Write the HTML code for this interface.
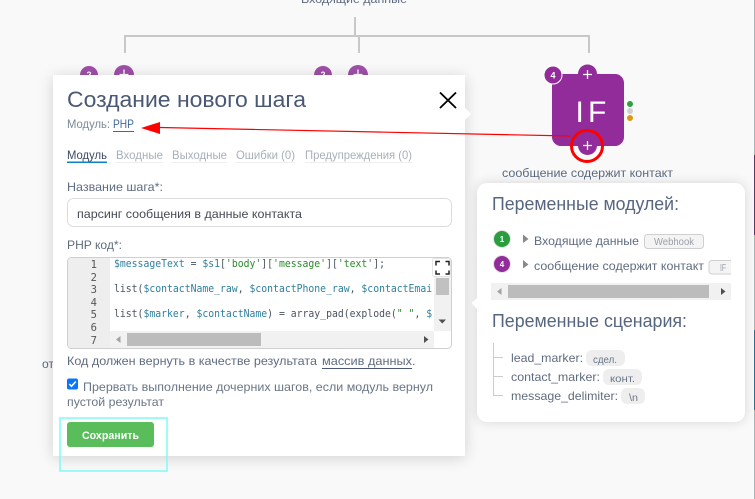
<!DOCTYPE html>
<html lang="ru"><head><meta charset="utf-8"><title>Создание нового шага</title>
<style>
html,body{margin:0;padding:0;width:755px;height:499px;overflow:hidden;background:#f9f9f9}
svg{position:absolute;left:0;top:0;filter:blur(.3px)}
.box{position:absolute;background:#fff}
text{font-family:"Liberation Sans",sans-serif;font-size:12px;fill:#5c6a80}
.m{font-family:"DejaVu Sans Mono",monospace;font-size:11px;fill:#4a5560}
.n{font-family:"DejaVu Sans Mono",monospace;font-size:10.500px;fill:#555;text-anchor:end}
.v{fill:#2f7f9f}.s{fill:#2c8a2c}
</style></head><body>
<svg width="755" height="499" viewBox="0 0 755 499">
<rect x="754" y="0" width="1" height="499" fill="#a9b3b3"/>
<rect x="754" y="155" width="1" height="80" fill="#5a3a6a"/>
<rect x="754" y="330" width="1" height="80" fill="#2f6f8f"/>
<g fill="none" stroke="#c8c8c8" stroke-width="2">
<path d="M125 53V36H589V53M355 17V36M359 36V53"/>
</g>
<text x="301" y="3" textLength="106" lengthAdjust="spacingAndGlyphs">Входящие данные</text>
<circle cx="89" cy="75" r="9" fill="#a04fa9"/><circle cx="124" cy="75" r="10" fill="#a04fa9"/>
<circle cx="323" cy="75" r="9" fill="#a04fa9"/><circle cx="358" cy="75" r="10" fill="#a04fa9"/>
<text x="89" y="78" text-anchor="middle" style="font-size:9px;font-weight:bold;fill:#fff">2</text>
<text x="323" y="78" text-anchor="middle" style="font-size:9px;font-weight:bold;fill:#fff">2</text>
<path d="M124 69.500V79M119.500 74.500H128.500M358 69.500V79M353.500 74.500H362.500" stroke="#fff" stroke-width="1.300"/>
<text x="42" y="368" textLength="12" lengthAdjust="spacingAndGlyphs">от</text>
<rect x="552" y="74" width="72" height="72" rx="9" fill="#922c9a"/>
<circle cx="587.500" cy="74" r="9.500" fill="#922c9a"/>
<circle cx="553" cy="75" r="9" fill="#922c9a" stroke="#fff" stroke-width="1"/>
<text x="553" y="78.500" text-anchor="middle" style="font-size:9px;font-weight:bold;fill:#fff">4</text>
<path d="M587.500 70V79M583 74.500H592" stroke="#fff" stroke-width="1.300"/>
<text y="122" style="font-size:30px;fill:#fff"><tspan x="575.500">I</tspan><tspan x="588">F</tspan></text>
<circle cx="630" cy="104" r="3" fill="#2ea043"/><circle cx="630" cy="111" r="3" fill="#cfcfcf"/><circle cx="630" cy="118" r="3" fill="#dc9a12"/>
<path d="M572 146A15.500 15.500 0 0 0 603 146Z" fill="#f9f9f9"/>
<circle cx="587.500" cy="145.500" r="9.500" fill="#922c9a"/>
<path d="M587.500 141V150M583 145.500H592" stroke="#fff" stroke-width="1.300"/>
<text x="502" y="177" textLength="171" lengthAdjust="spacingAndGlyphs">сообщение содержит контакт</text>
</svg>

<div class="box" style="left:53px;top:75px;width:412px;height:381px;box-shadow:0 2px 14px rgba(0,0,0,.16)"></div>
<div class="box" style="left:477px;top:183px;width:268px;height:239px;border-radius:10px;box-shadow:0 0 12px rgba(0,0,0,.14)"></div>

<svg width="755" height="499" viewBox="0 0 755 499">
<path d="M465 108L471 114L465 120Z" fill="#fff"/>
<path d="M477 298L471.500 303L477 309Z" fill="#fff"/>
<path d="M440 92.500L456 108M456 92.500L440 108" stroke="#000" stroke-width="1.800" fill="none"/>
<text x="67" y="107" textLength="239" lengthAdjust="spacingAndGlyphs" style="font-size:22px;fill:#4a5874">Создание нового шага</text>
<text x="67" y="128" textLength="43" lengthAdjust="spacingAndGlyphs" style="fill:#7b8a9a">Модуль:</text>
<text x="113" y="128" textLength="21" lengthAdjust="spacingAndGlyphs" style="fill:#3f6a9c">PHP</text>
<rect x="113" y="131" width="21" height="1" fill="#3f6a9c"/>

<text x="67" y="159" textLength="40" lengthAdjust="spacingAndGlyphs" style="fill:#3d4a66">Модуль</text>
<text x="116" y="159" textLength="47" lengthAdjust="spacingAndGlyphs" style="fill:#a7b0ba">Входные</text>
<text x="172" y="159" textLength="55" lengthAdjust="spacingAndGlyphs" style="fill:#a7b0ba">Выходные</text>
<text x="236" y="159" textLength="59" lengthAdjust="spacingAndGlyphs" style="fill:#a7b0ba">Ошибки (0)</text>
<text x="305" y="159" textLength="107" lengthAdjust="spacingAndGlyphs" style="fill:#a7b0ba">Предупреждения (0)</text>
<rect x="67" y="161.500" width="40" height="1.500" fill="#0a84c6"/>
<g fill="#eeeeee"><rect x="116" y="162" width="47" height="1"/><rect x="172" y="162" width="55" height="1"/><rect x="236" y="162" width="59" height="1"/><rect x="305" y="162" width="107" height="1"/></g>

<text x="67" y="191" textLength="96" lengthAdjust="spacingAndGlyphs" style="fill:#5f6c80">Название шага*:</text>
<rect x="67.500" y="198.500" width="384" height="28" rx="6" fill="#fff" stroke="#dcdcdc"/>
<text x="77" y="218" textLength="225" lengthAdjust="spacingAndGlyphs" style="fill:#454b55">парсинг сообщения в данные контакта</text>
<text x="67" y="249" textLength="55" lengthAdjust="spacingAndGlyphs" style="fill:#5f6c80">PHP код*:</text>

<rect x="67.500" y="257.500" width="384" height="91" rx="4" fill="#fff" stroke="#cfcfcf"/>
<path d="M68 262a4 4 0 0 1 4-4H110V348H72a4 4 0 0 1-4-4Z" fill="#eeeeee"/>
<g>
<text class="n" x="97" y="268">1</text><text class="n" x="97" y="281">2</text><text class="n" x="97" y="293">3</text><text class="n" x="97" y="306">4</text><text class="n" x="97" y="318">5</text><text class="n" x="97" y="331">6</text><text class="n" x="97" y="344">7</text>
</g>
<clipPath id="c"><rect x="110" y="258" width="322" height="73"/></clipPath>
<g clip-path="url(#c)">
<text class="m" transform="translate(114 267) scale(.89 1)"><tspan class="v">$messageText</tspan> = <tspan class="v">$s1</tspan>[<tspan class="s">'body'</tspan>][<tspan class="s">'message'</tspan>][<tspan class="s">'text'</tspan>];</text>
<text class="m" transform="translate(114 292) scale(.89 1)">list(<tspan class="v">$contactName_raw</tspan>, <tspan class="v">$contactPhone_raw</tspan>, <tspan class="v">$contactEmail_raw</tspan>)</text>
<text class="m" transform="translate(114 317) scale(.89 1)">list(<tspan class="v">$marker</tspan>, <tspan class="v">$contactName</tspan>) = array_pad(explode(<tspan class="s">" "</tspan>, <tspan class="v">$contactName_raw</tspan>)</text>
</g>
<rect x="434" y="276" width="17" height="55" fill="#f1f1f1"/>
<rect x="436" y="278" width="13" height="17" fill="#c1c1c1"/>
<path d="M438.500 319.500H446L442.300 323.500Z" fill="#505050"/>
<rect x="110" y="331" width="324" height="17" fill="#f1f1f1"/>
<rect x="127" y="333" width="134" height="13" fill="#bcbcbc"/>
<path d="M120.500 336V343L116 339.500Z" fill="#a3a3a3"/><path d="M424 336V343L428.500 339.500Z" fill="#505050"/>
<rect x="432.500" y="258.500" width="18" height="18" rx="2" fill="#fff" stroke="#e4e4e4"/>
<path d="M436 265.500V261.500H440M445.500 261.500H449V265.500M449 270.500V274H445.500M440 274H436V270.500" fill="none" stroke="#222" stroke-width="1.500"/>

<text x="67" y="365" textLength="250" lengthAdjust="spacingAndGlyphs" style="fill:#5f6c80">Код должен вернуть в качестве результата</text>
<text x="322" y="365" textLength="90" lengthAdjust="spacingAndGlyphs" style="fill:#5f6c80">массив данных</text>
<text x="412" y="365" style="fill:#5f6c80">.</text>
<rect x="322" y="368" width="90" height="1" fill="#4a5874"/>
<rect x="67" y="378.500" width="11" height="11" rx="2" fill="#0a75f5"/>
<path d="M69.300 384L71.500 386.300L75.800 381.500" fill="none" stroke="#fff" stroke-width="1.600"/>
<text x="83" y="391" textLength="350" lengthAdjust="spacingAndGlyphs" style="fill:#6a7686">Прервать выполнение дочерних шагов, если модуль вернул</text>
<text x="67" y="406" textLength="97" lengthAdjust="spacingAndGlyphs" style="fill:#6a7686">пустой результат</text>
<rect x="67" y="422" width="87" height="25" rx="3" fill="#58bd5a"/>
<text x="82" y="439" textLength="57" lengthAdjust="spacingAndGlyphs" style="fill:#fff;font-size:11px;font-weight:bold">Сохранить</text>
<rect x="60" y="418" width="107" height="53" fill="none" stroke="#7dfafa" stroke-width="1.500"/>

<text x="492" y="210" textLength="187" lengthAdjust="spacingAndGlyphs" style="font-size:18px;fill:#566580">Переменные модулей:</text>
<circle cx="502" cy="239" r="8.500" fill="#2a9d3f" stroke="#e4e4e4"/>
<text x="502" y="242" text-anchor="middle" style="font-size:8px;font-weight:bold;fill:#fff">1</text>
<circle cx="502" cy="264" r="8.500" fill="#922c9a" stroke="#e4e4e4"/>
<text x="502" y="267" text-anchor="middle" style="font-size:8px;font-weight:bold;fill:#fff">4</text>
<path d="M523 234.500V243L528.500 239Z M523 260V268.500L528.500 264.500Z" fill="#888"/>
<text x="534" y="245" textLength="105" lengthAdjust="spacingAndGlyphs" style="fill:#5f6c80">Входящие данные</text>
<rect x="644.500" y="234.500" width="59" height="14" rx="3" fill="#f4f4f4" stroke="#cfcfcf"/>
<text x="654" y="245" textLength="40" lengthAdjust="spacingAndGlyphs" style="font-size:10px;fill:#9aa0a8">Webhook</text>
<text x="534" y="270" textLength="170" lengthAdjust="spacingAndGlyphs" style="fill:#5f6c80">сообщение содержит контакт</text>
<path d="M731 260.500H712a3 3 0 0 0-3 3V271a3 3 0 0 0 3 3H731" fill="#f4f4f4" stroke="#cfcfcf"/>
<text x="720" y="271" textLength="6" lengthAdjust="spacingAndGlyphs" style="font-size:10px;fill:#9aa0a8">IF</text>
<rect x="491" y="283" width="240" height="17" fill="#f1f1f1"/>
<rect x="508" y="285" width="201" height="13" fill="#bcbcbc"/>
<path d="M501.500 288V295L497 291.500Z" fill="#a3a3a3"/><path d="M721 288V295L725.500 291.500Z" fill="#505050"/>

<text x="492" y="327" textLength="195" lengthAdjust="spacingAndGlyphs" style="font-size:18px;fill:#566580">Переменные сценария:</text>
<path d="M493.500 343V395.500H503M493.500 357.500H503M493.500 376.500H503" fill="none" stroke="#cccccc"/>
<text x="511" y="362" textLength="72" lengthAdjust="spacingAndGlyphs" style="fill:#5f6c80">lead_marker:</text>
<rect x="586" y="350" width="39" height="16" rx="6" fill="#eeeeee"/>
<text x="593" y="363" textLength="24" lengthAdjust="spacingAndGlyphs" style="font-size:10px;fill:#6a7686">сдел.</text>
<text x="511" y="381" textLength="89" lengthAdjust="spacingAndGlyphs" style="fill:#5f6c80">contact_marker:</text>
<rect x="603" y="369" width="39" height="16" rx="6" fill="#eeeeee"/>
<text x="610" y="382" textLength="25" lengthAdjust="spacingAndGlyphs" style="font-size:10px;fill:#6a7686">конт.</text>
<text x="511" y="400" textLength="107" lengthAdjust="spacingAndGlyphs" style="fill:#5f6c80">message_delimiter:</text>
<rect x="621" y="388" width="24" height="16" rx="6" fill="#eeeeee"/>
<text x="629" y="401" textLength="9" lengthAdjust="spacingAndGlyphs" style="font-size:10px;fill:#6a7686">\n</text>

<path d="M160 127.500L570 136" stroke="#f00" stroke-width="1.200" fill="none"/>
<path d="M141 128L160 122V134Z" fill="#f00"/>
<circle cx="587" cy="146" r="15.500" fill="none" stroke="#f00" stroke-width="3"/>
</svg>
</body></html>
